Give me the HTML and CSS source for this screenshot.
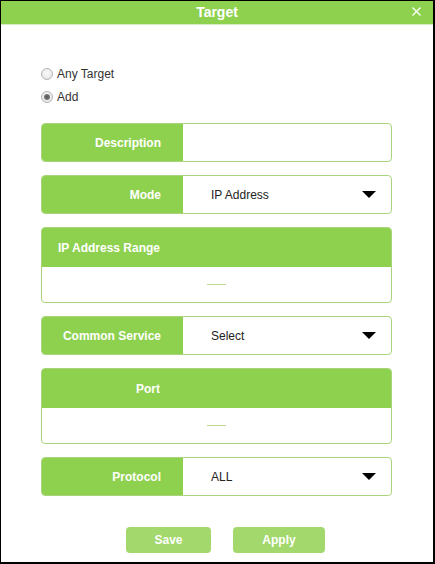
FILE: index.html
```html
<!DOCTYPE html>
<html>
<head>
  <meta charset="UTF-8">
  <title>Target</title>
  <link rel="stylesheet" href="styles.css">
</head>
<body>
  <div class="dialog">
    <div class="dialog-head">
      <span class="dialog-title">Target</span>
      <svg class="close" width="9" height="9" viewBox="0 0 9 9">
        <path d="M0.5 0.5 L8.5 8.5 M8.5 0.5 L0.5 8.5" stroke="#fff" stroke-width="1.3" fill="none"/>
      </svg>
    </div>

    <div class="dialog-body">
      <div class="radios">
        <label class="radio"><span class="dot"></span>Any Target</label>
        <label class="radio checked"><span class="dot"></span>Add</label>
      </div>

      <div class="field">
        <div class="field-label">Description</div>
        <div class="field-value"></div>
      </div>

      <div class="field">
        <div class="field-label">Mode</div>
        <div class="field-value select">IP Address<span class="caret"></span></div>
      </div>

      <div class="box">
        <div class="box-head"><div class="field-label">IP Address Range</div></div>
        <div class="box-body"><span class="dash"></span></div>
      </div>

      <div class="field">
        <div class="field-label">Common Service</div>
        <div class="field-value select">Select<span class="caret"></span></div>
      </div>

      <div class="box">
        <div class="box-head"><div class="field-label">Port</div></div>
        <div class="box-body"><span class="dash"></span></div>
      </div>

      <div class="field">
        <div class="field-label">Protocol</div>
        <div class="field-value select">ALL<span class="caret"></span></div>
      </div>

      <div class="actions">
        <button class="btn save">Save</button>
        <button class="btn apply">Apply</button>
      </div>
    </div>
  </div>
</body>
</html>
```

FILE: styles.css
```css
* {
  box-sizing: border-box;
}
body {
  margin: 0;
  font-family: "Liberation Sans", Arial, sans-serif;
  font-size: 12px;
  background: #fff;
}
.dialog {
  width: 435px;
  height: 564px;
  border-top: 1px solid #000;
  border-left: 1px solid #000;
  border-right: 2px solid #000;
  border-bottom: 2px solid #000;
  background: #fff;
}
.dialog-head {
  position: relative;
  height: 24px;
  background: #8ed14f;
  border-bottom: 1px solid #d6efbf;
  text-align: center;
}
.dialog-title {
  color: #fff;
  font-weight: bold;
  font-size: 14px;
  line-height: 22px;
}
.close {
  position: absolute;
  right: 12px;
  top: 6px;
}
.dialog-body {
  padding: 41px 41px 0 40px;
}
.radios {
  display: flex;
  flex-direction: column;
  gap: 7px;
  margin-bottom: 18px;
}
.radio {
  display: flex;
  align-items: center;
  gap: 4px;
  color: #333;
  font-size: 12px;
  line-height: 16px;
}
.dot {
  width: 12px;
  height: 12px;
  border-radius: 50%;
  border: 1px solid #b4b4b4;
  background: radial-gradient(circle at 50% 40%, #fafafa 0%, #e2e2e2 100%);
  position: relative;
}
.checked .dot::after {
  content: "";
  position: absolute;
  left: 2px;
  top: 2px;
  width: 6px;
  height: 6px;
  border-radius: 50%;
  background: radial-gradient(circle, #555 0%, #8a8a8a 100%);
}
.field {
  display: flex;
  height: 39px;
  border: 1px solid #a9d47c;
  border-radius: 4px;
  overflow: hidden;
  margin-bottom: 13px;
}
.field-label {
  width: 141px;
  flex: none;
  background: #8ed14f;
  color: #fff;
  font-weight: bold;
  padding-right: 22px;
  display: flex;
  align-items: center;
  justify-content: flex-end;
}
.field-value {
  flex: 1;
  display: flex;
  align-items: center;
  padding: 0 15px 0 28px;
  color: #222;
}
.caret {
  margin-left: auto;
  width: 0;
  height: 0;
  border-left: 7px solid transparent;
  border-right: 7px solid transparent;
  border-top: 7px solid #000;
}
.box {
  height: 76px;
  border: 1px solid #a9d47c;
  border-radius: 4px;
  overflow: hidden;
  margin-bottom: 13px;
}
.box-head {
  height: 39px;
  display: flex;
  background: #8ed14f;
}
.box-head .field-label {
  margin-left: -1px;
}
.box-body {
  height: 35px;
  display: flex;
  align-items: center;
  justify-content: center;
}
.dash {
  width: 19px;
  height: 1px;
  background: #c3d88f;
}
.actions {
  display: flex;
  gap: 22px;
  padding-left: 85px;
  margin-top: 31px;
}
.btn {
  height: 26px;
  border: none;
  border-radius: 4px;
  background: #a2d86c;
  color: #fff;
  font-family: "Liberation Sans", Arial, sans-serif;
  font-size: 12px;
  font-weight: bold;
  cursor: pointer;
}
.save {
  width: 85px;
}
.apply {
  width: 92px;
}
```
